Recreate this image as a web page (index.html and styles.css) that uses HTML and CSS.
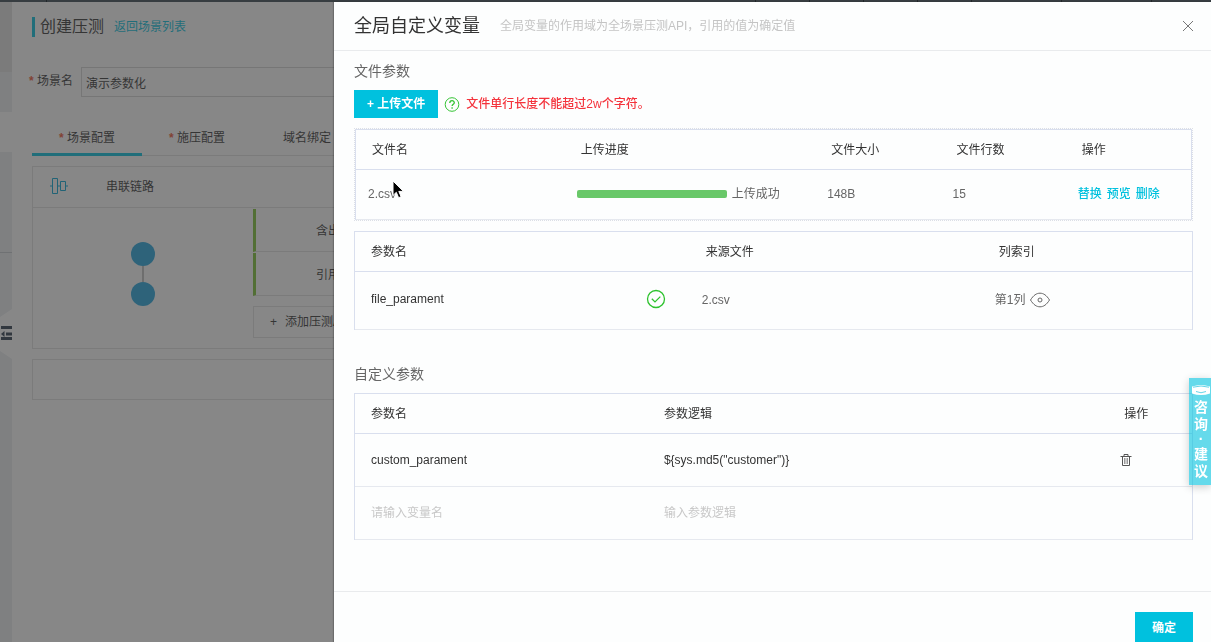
FILE: index.html
```html
<!DOCTYPE html>
<html lang="zh-CN">
<head>
    <meta charset="UTF-8">
    <meta name="viewport" content="width=device-width, initial-scale=1.0">
    <title>创建压测</title>
    <link rel="stylesheet" href="styles.css">
</head>
<body>
    <div class="topbar">
        <i class="first"></i><i></i><i></i><i></i><i></i><i></i><i class="wide"></i><i class="wide"></i>
    </div>

    <!-- Page behind the drawer -->
    <div class="page">
        <aside class="sidebar">
            <div class="side-block side-dark"></div>
            <div class="side-block side-item"></div>
            <div class="side-block side-active"></div>
            <div class="side-block side-group"></div>
            <div class="side-block side-rest">
                <svg class="side-toggle" width="12" height="50" viewBox="0 0 12 50">
                    <path d="M12 0L0 8v34l12 8z" fill="#fff"/>
                    <path d="M1 17h11v3H1zM6 23.5h6v3H6zM1 28h11v3H1z" fill="#2b3a4d"/>
                    <path d="M4.5 22v6L1 25z" fill="#2b3a4d"/>
                </svg>
            </div>
        </aside>

        <main class="content">
            <div class="page-title">
                <h1>创建压测</h1>
                <a href="#">返回场景列表</a>
            </div>

            <div class="scene-row">
                <label for="scene"><b class="star">*</b> 场景名</label>
                <input id="scene" type="text" value="演示参数化">
            </div>

            <nav class="tabs">
                <a class="tab active" href="#"><b class="star">*</b> 场景配置</a>
                <a class="tab" href="#"><b class="star">*</b> 施压配置</a>
                <a class="tab" href="#">域名绑定</a>
            </nav>

            <section class="card">
                <div class="card-head">
                    <svg width="18" height="18" viewBox="0 0 18 18" fill="none" stroke="#00a5d5">
                        <path d="M0 8h2M8 8h3M16 8h2M2.500.500h5v15h-5zM10.500 3.500h5v9h-5z"/>
                    </svg>
                    <span>串联链路</span>
                </div>
                <div class="card-body">
                    <div class="chain">
                        <span class="node"></span>
                        <span class="link"></span>
                        <span class="node"></span>
                    </div>
                    <div class="apis">
                        <div class="api">含出参</div>
                        <div class="api">引用出参</div>
                        <button class="add-api" type="button"><span>+</span>添加压测API</button>
                    </div>
                </div>
            </section>

            <section class="card card-empty"></section>
        </main>
    </div>

    <div class="mask"></div>

    <!-- Drawer -->
    <div class="drawer" role="dialog" aria-labelledby="drawer-title">
        <header class="drawer-head">
            <h2 id="drawer-title">全局自定义变量</h2>
            <p>全局变量的作用域为全场景压测API，引用的值为确定值</p>
            <button class="close" type="button" aria-label="关闭">
                <svg width="12" height="12" viewBox="0 0 12 12" fill="none" stroke="#777">
                    <path d="M1 1l10 10M11 1L1 11"/>
                </svg>
            </button>
        </header>

        <div class="drawer-body">
            <h3>文件参数</h3>
            <div class="upload">
                <button class="btn" type="button">+ 上传文件</button>
                <svg width="16" height="16" viewBox="0 0 16 16" fill="none" stroke="#35c435">
                    <circle cx="8" cy="8.500" r="6.800"/>
                    <path d="M5.800 7c0-3 4.500-3 4.500-.3 0 1.500-2.200 1.600-2.200 3.300M8.100 11.200v1.500" stroke-width="1.300"/>
                </svg>
                <span class="warn">文件单行长度不能超过2w个字符。</span>
            </div>

            <div class="file-box">
                <table>
                    <colgroup>
                        <col class="w25"><col class="w30"><col class="w15"><col class="w15"><col class="w15">
                    </colgroup>
                    <thead>
                        <tr><th>文件名</th><th>上传进度</th><th>文件大小</th><th>文件行数</th><th>操作</th></tr>
                    </thead>
                    <tbody>
                        <tr class="row-file">
                            <td>2.csv</td>
                            <td><div class="progress"><span class="bar"></span>上传成功</div></td>
                            <td>148B</td>
                            <td>15</td>
                            <td><div class="ops"><a href="#">替换</a><a href="#">预览</a><a href="#">删除</a></div></td>
                        </tr>
                    </tbody>
                </table>
            </div>

            <table>
                <colgroup>
                    <col class="w40"><col class="w35"><col class="w25">
                </colgroup>
                <thead>
                    <tr><th>参数名</th><th>来源文件</th><th>列索引</th></tr>
                </thead>
                <tbody>
                    <tr class="row-param">
                        <td class="field">
                            <div class="param">
                                <input type="text" value="file_parament" aria-label="参数名">
                                <svg width="20" height="20" viewBox="0 0 20 20" fill="none" stroke="#2dc22d" stroke-width="1.300">
                                    <circle cx="10" cy="10" r="8.500"/>
                                    <path d="M5.800 9.700l3.200 3.200 5.300-5.300"/>
                                </svg>
                            </div>
                        </td>
                        <td>2.csv</td>
                        <td>
                            <div class="index">第1列
                                <svg width="20" height="16" viewBox="0 0 20 16" fill="none" stroke="#666">
                                    <path d="M.500 8C3.500 3.200 6.500 1.200 10 1.200S16.500 3.200 19.500 8C16.500 12.800 13.500 14.800 10 14.800S3.500 12.800.500 8z"/>
                                    <circle cx="10" cy="8" r="2"/>
                                </svg>
                            </div>
                        </td>
                    </tr>
                </tbody>
            </table>

            <h3 class="custom-title">自定义参数</h3>
            <table>
                <colgroup>
                    <col class="w35"><col class="w55"><col class="w10">
                </colgroup>
                <thead>
                    <tr><th>参数名</th><th>参数逻辑</th><th>操作</th></tr>
                </thead>
                <tbody>
                    <tr class="row-custom">
                        <td class="field"><input type="text" value="custom_parament" aria-label="参数名"></td>
                        <td class="field"><input type="text" value='${sys.md5("customer")}' aria-label="参数逻辑"></td>
                        <td>
                            <button class="trash" type="button" aria-label="删除">
                                <svg width="12" height="12" viewBox="0 0 12 12" fill="none" stroke="#555">
                                    <path d="M.500 2.500h11M4 2.500v-2h4v2M2.500 2.500v9h7v-9"/>
                                    <path d="M4.500 4v6M6 4v6M7.500 4v6" stroke="#999"/>
                                </svg>
                            </button>
                        </td>
                    </tr>
                    <tr class="row-custom">
                        <td class="field"><input type="text" placeholder="请输入变量名" aria-label="参数名"></td>
                        <td class="field"><input type="text" placeholder="输入参数逻辑" aria-label="参数逻辑"></td>
                        <td></td>
                    </tr>
                </tbody>
            </table>
        </div>

        <footer class="drawer-foot">
            <button class="btn btn-ok" type="button">确定</button>
        </footer>
    </div>

    <a class="feedback" href="#">
        <svg width="18" height="12" viewBox="0 0 18 12" fill="#fff">
            <path d="M0 2.500Q9-.5 18 2.500V9.500Q9 12.500 0 9.500z"/>
            <path d="M1 3.200Q9 .8 17 3.200M4 7.500Q9 10 14 7.500" fill="none" stroke="#66d5e8"/>
        </svg>
        <span>咨</span><span>询</span><span class="dot">·</span><span>建</span><span>议</span>
    </a>

    <svg class="cursor" width="14" height="20" viewBox="0 0 14 20">
        <path d="M1 1v14.500l3.300-3.200 2.300 5.400 2.500-1-2.300-5.300h4.700z" fill="#000" stroke="#fff"/>
    </svg>
</body>
</html>
```

FILE: styles.css
```css
* {
    box-sizing: border-box;
}
body {
    margin: 0;
    height: 100vh;
    overflow: hidden;
    font-family: "Liberation Sans", "Noto Sans CJK SC", sans-serif;
    font-size: 12px;
    line-height: 20px;
    color: #333;
    background: #fff;
}
h1, h2, h3, p {
    margin: 0;
    font-weight: normal;
}
a {
    color: #00c1de;
    text-decoration: none;
}
button, input {
    font: inherit;
    color: inherit;
    border: 0;
    padding: 0;
    background: none;
}
button {
    cursor: pointer;
}
svg {
    display: block;
    flex: none;
}

.topbar {
    display: flex;
    gap: 53px;
    height: 2px;
    padding: 0 59px 0 46px;
    background: #373d41;
}
.topbar i {
    width: 1px;
    background: #22272a;
}
.topbar .first {
    margin-right: auto;
}
.topbar .wide {
    margin-left: 36px;
}

/* page */
.page {
    display: flex;
    height: calc(100vh - 2px);
    overflow: hidden;
}
.sidebar {
    display: flex;
    flex: none;
    flex-direction: column;
    width: 12px;
    background: #eaedf1;
}
.side-dark {
    height: 70px;
    background: #e0e0e0;
}
.side-item {
    height: 40px;
}
.side-active {
    height: 40px;
    background: #fff;
}
.side-group {
    height: 101px;
    border-bottom: 1px solid #c4c8cc;
}
.side-rest {
    flex: 1;
    padding-top: 56px;
}
.content {
    flex: 1;
    min-width: 0;
    padding: 14px 20px;
}
.page-title {
    display: flex;
    align-items: flex-end;
    gap: 10px;
    height: 21px;
}
.page-title h1 {
    padding-left: 5px;
    border-left: 3px solid #00c1de;
    font-size: 16px;
    line-height: 20px;
}
.star {
    color: #f15533;
}
.scene-row {
    display: flex;
    gap: 8px;
    margin: 30px 0 28px -3px;
}
.scene-row label {
    padding-top: 4px;
}
.scene-row input {
    flex: 1;
    height: 30px;
    padding: 0 4px;
    border: 1px solid #d5d5d5;
}
.tabs {
    display: flex;
    border-bottom: 1px solid #e0e0e0;
}
.tab {
    width: 110px;
    height: 31px;
    margin-bottom: -1px;
    padding-top: 3px;
    color: #333;
    text-align: center;
}
.tab.active {
    border-bottom: 3px solid #00c1de;
}
.card {
    margin-top: 10px;
    border: 1px solid #e0e0e0;
}
.card-head {
    display: flex;
    align-items: center;
    gap: 38px;
    height: 41px;
    padding-left: 17px;
    border-bottom: 1px solid #e0e0e0;
}
.card-body {
    display: flex;
    height: 140px;
    padding-top: 1px;
}
.chain {
    display: flex;
    flex-direction: column;
    align-items: center;
    width: 220px;
    padding-top: 33px;
}
.node {
    width: 24px;
    height: 24px;
    border-radius: 50%;
    background: #22a5de;
}
.link {
    width: 2px;
    height: 16px;
    background: #c0c0c0;
}
.apis {
    flex: 1;
}
.api {
    height: 43px;
    margin-bottom: 1px;
    padding: 12px 0 0 60px;
    border-left: 3px solid #7cc432;
    border-bottom: 1px solid #e0e0e0;
}
.add-api {
    display: flex;
    align-items: center;
    gap: 8px;
    height: 32px;
    margin-top: 10px;
    padding: 0 16px;
    border: 1px solid #e0e0e0;
}
.card-empty {
    height: 41px;
}

.mask {
    position: fixed;
    inset: 2px 0 0;
    background: rgba(55, 55, 55, 0.6);
}

/* drawer */
.drawer {
    position: fixed;
    inset: 2px 0 0 334px;
    overflow: hidden;
    background: #fdfefe;
    box-shadow: -1px 0 1px rgba(0, 0, 0, 0.2);
}
.drawer-head {
    display: flex;
    align-items: center;
    gap: 20px;
    height: 49px;
    padding: 0 17px 0 20px;
    border-bottom: 1px solid #e9ebed;
}
.drawer-head h2 {
    font-size: 18px;
}
.drawer-head p {
    color: #c4c4c4;
}
.close {
    margin-left: auto;
}
.drawer-body {
    padding: 10px 18px 51px 20px;
}
.drawer-body h3 {
    margin-bottom: 9px;
    font-size: 14px;
    color: #666;
}
.drawer-body .custom-title {
    margin-top: 34px;
}
.upload {
    display: flex;
    align-items: center;
    gap: 6px;
    margin-bottom: 10px;
}
.btn {
    height: 28px;
    padding: 0 13px;
    background: #00c1de;
    color: #fff;
    font-weight: bold;
}
.warn {
    color: #f4333c;
    font-weight: 500;
}
.file-box {
    margin-bottom: 10px;
    border: 1px dotted #dcdfe6;
}
table {
    width: 100%;
    table-layout: fixed;
    border: 1px solid #d9dfee;
    border-bottom: 0;
    border-spacing: 0;
}
.w10 { width: 10%; }
.w15 { width: 15%; }
.w25 { width: 25%; }
.w30 { width: 30%; }
.w35 { width: 35%; }
.w40 { width: 40%; }
.w55 { width: 55%; }
th {
    height: 40px;
    padding: 0 16px;
    border-bottom: 1px solid #d9dfee;
    font-weight: normal;
    text-align: left;
}
td {
    padding: 0 12px 1px;
    border-bottom: 1px solid #e6e9ef;
    color: #666;
}
td.field {
    padding: 0 16px;
    color: #333;
}
td input {
    display: block;
    width: 100%;
    min-width: 0;
    outline: 0;
}
td input::placeholder {
    color: #c8c8c8;
    opacity: 1;
}
.row-file td {
    height: 50px;
}
.row-param td {
    height: 58px;
}
.row-param td.field {
    padding-bottom: 4px;
}
.row-custom td {
    height: 53px;
}
.progress, .ops, .param, .index {
    display: flex;
    align-items: center;
    gap: 5px;
}
.ops {
    font-weight: 500;
}
.bar {
    width: 150px;
    height: 8px;
    border-radius: 2px;
    background: #69c869;
}
.param {
    padding-right: 8px;
}
.trash {
    display: block;
}
.drawer-foot {
    display: flex;
    justify-content: flex-end;
    padding: 20px 18px;
    border-top: 1px solid #e9ebed;
}
.btn-ok {
    height: 32px;
    padding: 0 17px;
}

/* floating feedback tab */
.feedback {
    position: fixed;
    top: 378px;
    right: 0;
    display: flex;
    flex-direction: column;
    align-items: center;
    width: 22px;
    height: 107px;
    padding: 6px 0 0 2px;
    background: rgba(0, 193, 222, 0.6);
    box-shadow: 0 2px 8px rgba(0, 0, 0, 0.2);
    color: #fff;
    font-size: 14px;
    font-weight: bold;
    line-height: 17px;
}
.feedback svg {
    margin-bottom: 3px;
}
.feedback .dot {
    line-height: 13px;
}
.cursor {
    position: fixed;
    top: 180px;
    left: 392px;
}
```
